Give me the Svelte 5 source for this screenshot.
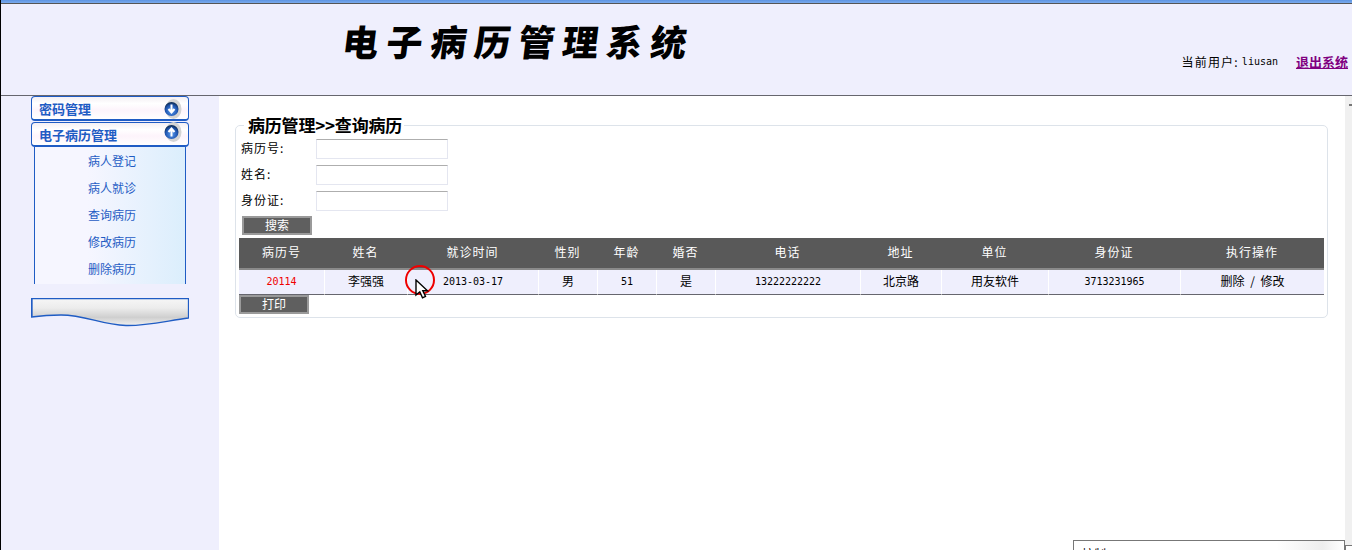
<script>
  const columns = [
    { label: '病历号', width: 85 },
    { label: '姓名', width: 83 },
    { label: '就诊时间', width: 131 },
    { label: '性别', width: 59 },
    { label: '年龄', width: 59 },
    { label: '婚否', width: 59 },
    { label: '电话', width: 145 },
    { label: '地址', width: 81 },
    { label: '单位', width: 107 },
    { label: '身份证', width: 132 },
    { label: '执行操作', width: 144 }
  ];

  const menuItems = ['病人登记', '病人就诊', '查询病历', '修改病历', '删除病历'];
  const searchFields = ['病历号:', '姓名:', '身份证:'];
</script>

<div class="page">
  <div class="topbar"></div>

  <header class="header">
    <h1 class="title"><span>电子病历管理系统</span></h1>
    <div class="user">
      <span class="user-label">当前用户:</span>
      <span class="user-name">liusan</span>
      <a class="logout" href="#top">退出系统</a>
    </div>
  </header>

  <div class="body">
    <aside class="sidebar">
      <div class="menu-head">
        <span>密码管理</span>
        <svg class="arrow" viewBox="0 0 20 20" width="20" height="20">
          <defs>
            <radialGradient id="ball" cx="0.5" cy="0.65" r="0.6">
              <stop offset="0" stop-color="#5a9cf0" />
              <stop offset="0.7" stop-color="#1f55b0" />
              <stop offset="1" stop-color="#10305c" />
            </radialGradient>
          </defs>
          <ellipse cx="11.500" cy="10" rx="8" ry="10" fill="#d4d4d4" />
          <circle cx="9.500" cy="10" r="7" fill="url(#ball)" />
          <path d="M9.500 5.500v8M6.500 10l3 3.500 3-3.500" fill="none" stroke="#fff" stroke-width="2" />
        </svg>
      </div>
      <div class="menu-head">
        <span>电子病历管理</span>
        <svg class="arrow up" viewBox="0 0 20 20" width="20" height="20">
          <ellipse cx="11.500" cy="10" rx="8" ry="10" fill="#d4d4d4" />
          <circle cx="9.500" cy="10" r="7" fill="url(#ball)" />
          <path d="M9.500 14.500v-8M6.500 10l3-3.500 3 3.500" fill="none" stroke="#fff" stroke-width="2" />
        </svg>
      </div>
      <ul class="menu-list">
        {#each menuItems as item}
          <li>{item}</li>
        {/each}
      </ul>
      <svg class="menu-foot" viewBox="0 0 158 29" width="158" height="29">
        <defs>
          <linearGradient id="footFill" x1="0" y1="0" x2="0" y2="1">
            <stop offset="0" stop-color="#f6f6f6" />
            <stop offset="0.35" stop-color="#ececec" />
            <stop offset="0.7" stop-color="#cfcfcf" />
            <stop offset="1" stop-color="#f0f0f0" />
          </linearGradient>
        </defs>
        <path d="M.5.5H157.500V20C135 23 115 28 95 27.500 70 27 55 17 30 17 18 17 8 18 .5 19Z" fill="url(#footFill)" stroke="#1f5cc4" stroke-width="1.300" />
        <path d="M.8 1V18.500" stroke="#1f5cc4" stroke-width="1.600" />
      </svg>
    </aside>

    <main class="main">
      <fieldset class="panel">
        <legend>病历管理&gt;&gt;查询病历</legend>
        <div class="search">
          {#each searchFields as field}
            <div class="field">
              <span class="field-label">{field}</span>
              <input type="text" />
            </div>
          {/each}
          <button class="btn search-btn" type="button">搜索</button>
        </div>

        <table class="records">
          <colgroup>
            {#each columns as col}
              <col style="width: {col.width}px" />
            {/each}
          </colgroup>
          <thead>
            <tr>
              {#each columns as col}
                <th>{col.label}</th>
              {/each}
            </tr>
          </thead>
          <tbody>
            <tr>
              <td class="small red">20114</td>
              <td>李强强</td>
              <td class="small">2013-03-17</td>
              <td>男</td>
              <td class="small">51</td>
              <td>是</td>
              <td class="small">13222222222</td>
              <td>北京路</td>
              <td>用友软件</td>
              <td class="small">3713231965</td>
              <td class="actions">删除 / 修改</td>
            </tr>
          </tbody>
        </table>
        <button class="btn print-btn" type="button">打印</button>
      </fieldset>

      <div class="click-mark"></div>
      <svg class="cursor" viewBox="0 0 15 20" width="15" height="20">
        <path d="M1 1V16L4.800 12.800 7.500 18.800 10.500 17.500 7.800 11.800H12.500Z" fill="#fff" stroke="#000" stroke-width="1.400" />
      </svg>
    </main>

    <div class="scrollbar"></div>
  </div>

  <div class="popup"><span>控制</span></div>
</div>

<style>
  :global(body) {
    margin: 0;
    background: #fff;
  }

  .page {
    position: relative;
    height: 550px;
    overflow: hidden;
    display: flex;
    flex-direction: column;
    font-family: "Noto Sans CJK SC", "Liberation Sans", sans-serif;
    border-left: 1px solid #000;
    box-sizing: border-box;
  }

  .topbar {
    height: 3px;
    background: linear-gradient(#5d94e2, #7aaaec);
    border-bottom: 1px solid #555;
    flex: none;
  }

  .header {
    height: 91px;
    flex: none;
    background: #efeffd;
    border-bottom: 1px solid #66666e;
    display: flex;
    justify-content: space-between;
  }

  .title {
    margin: 0;
    padding: 14px 0 0 342px;
    font-size: 36px;
    line-height: 44px;
    font-weight: 900;
    letter-spacing: 8px;
    color: #000;
    white-space: nowrap;
  }

  .title span {
    display: inline-block;
    transform: skewX(-7deg);
  }

  .user {
    display: flex;
    align-items: center;
    align-self: flex-start;
    margin-top: 47px;
    padding-right: 4px;
    height: 20px;
    font-size: 12px;
    color: #000;
  }

  .user-label {
    letter-spacing: 1.200px;
  }

  .user-name {
    margin-left: 3px;
    font-family: "DejaVu Sans Mono", monospace;
    font-size: 10px;
  }

  .logout {
    margin-left: 18px;
    color: #800080;
    font-weight: 700;
    font-size: 13px;
  }

  .body {
    flex: 1;
    display: flex;
    min-height: 0;
  }

  .sidebar {
    width: 218px;
    flex: none;
    background: #efeffd;
    padding: 0 0 0 30px;
    box-sizing: border-box;
  }

  .menu-head {
    width: 158px;
    height: 25px;
    margin-bottom: 1px;
    padding: 1px 0 0 7px;
    box-sizing: border-box;
    border: 1px solid #1f5cc4;
    border-bottom-width: 2px;
    border-radius: 4px;
    background: linear-gradient(#f4f0f4, #fff 30%, #fdf4fb 60%, #fff);
    color: #1f5cc4;
    font-size: 13px;
    font-weight: 700;
    display: flex;
    align-items: center;
    justify-content: space-between;
  }

  .arrow {
    margin-right: 6px;
    margin-top: 1px;
  }

  .arrow.up {
    margin-top: -6px;
  }

  .menu-list {
    width: 152px;
    height: 137px;
    margin: -1px 0 0 3px;
    padding: 0 0 0 4px;
    list-style: none;
    box-sizing: border-box;
    border: solid #1f5cc4;
    border-width: 0 1px;
    background: linear-gradient(90deg, #f6f6ff, #f6f6ff 35%, #dbeefc);
  }

  .menu-list li {
    height: 27px;
    line-height: 27px;
    text-align: center;
    color: #1f5cc4;
    font-size: 12px;
  }

  .menu-foot {
    display: block;
    margin-top: 14px;
  }

  .main {
    position: relative;
    flex: 1;
    min-width: 0;
    background: #fff;
    padding: 19px 0 0 16px;
  }

  .panel {
    margin: 0;
    padding: 0 3px;
    width: 1093px;
    height: 203px;
    box-sizing: border-box;
    border: 1px solid #dde3ea;
    border-radius: 5px;
    min-width: 0;
  }

  legend {
    margin-left: 5px;
    padding: 0 2px 0 4px;
    font-size: 17px;
    font-weight: 700;
    line-height: 20px;
    letter-spacing: -0.200px;
    color: #000;
    white-space: nowrap;
  }

  .search {
    display: flex;
    flex-direction: column;
    gap: 6px;
    padding: 4px 0 0 2px;
  }

  .field {
    display: flex;
    align-items: center;
    height: 20px;
  }

  .field-label {
    width: 75px;
    padding-bottom: 3px;
    font-size: 12px;
    letter-spacing: 1px;
    color: #000;
  }

  input {
    width: 132px;
    height: 20px;
    padding: 0;
    box-sizing: border-box;
    background: #fff;
    border: 1px solid #e4e6f0;
    border-top-color: #aeaeae;
    outline: none;
  }

  .btn {
    display: block;
    height: 19px;
    width: 70px;
    padding: 0 0 2px;
    border: 2px solid #9a9a9a;
    background: #5f5f5f;
    color: #fff;
    font-family: inherit;
    font-size: 12px;
    line-height: 13px;
  }

  .search-btn {
    margin-top: -1px;
    margin-left: 1px;
  }

  .records {
    margin-top: 3px;
    width: 1085px;
    table-layout: fixed;
    border-collapse: separate;
    border-spacing: 0;
  }

  th {
    height: 32px;
    padding: 0 0 3px;
    box-sizing: border-box;
    background: #595959;
    border-bottom: 2px solid #8a8a8a;
    color: #fff;
    font-size: 12px;
    font-weight: 400;
    letter-spacing: 1px;
  }

  td {
    height: 25px;
    padding: 0 0 3px;
    box-sizing: border-box;
    background: #efeffd;
    border-left: 1px solid #fff;
    border-bottom: 1px solid #66666e;
    text-align: center;
    color: #000;
    font-size: 12px;
  }

  td:first-child {
    border-left: 0;
  }

  td.small {
    padding-bottom: 2px;
    font-size: 10px;
    font-family: "DejaVu Sans Mono", monospace;
  }

  td.red {
    color: #f00000;
  }

  td.actions {
    word-spacing: 3px;
  }

  .print-btn {
    margin-left: 0;
    margin-top: 0;
  }

  .click-mark {
    position: absolute;
    left: 186px;
    top: 169px;
    width: 30px;
    height: 30px;
    box-sizing: border-box;
    border: 2.500px solid #ee0000;
    border-radius: 50%;
  }

  .cursor {
    position: absolute;
    left: 196px;
    top: 183px;
  }

  .scrollbar {
    position: relative;
    width: 7px;
    flex: none;
    background: #f0f0f0;
  }

  .scrollbar::before {
    content: "";
    position: absolute;
    right: 0;
    top: 8px;
    width: 3px;
    height: 2px;
    background: #777;
  }

  .scrollbar::after {
    content: "";
    position: absolute;
    left: 0;
    top: 449px;
    width: 7px;
    height: 10px;
    background: #fff;
    border: 1px solid #777;
  }

  .popup {
    position: absolute;
    left: 1072px;
    top: 540px;
    width: 272px;
    height: 30px;
    box-sizing: border-box;
    background: linear-gradient(90deg, #fff 75%, #eee 92%, #fff);
    border: 1px solid #777;
    padding: 4px 0 0 8px;
    font-size: 12px;
  }
</style>
